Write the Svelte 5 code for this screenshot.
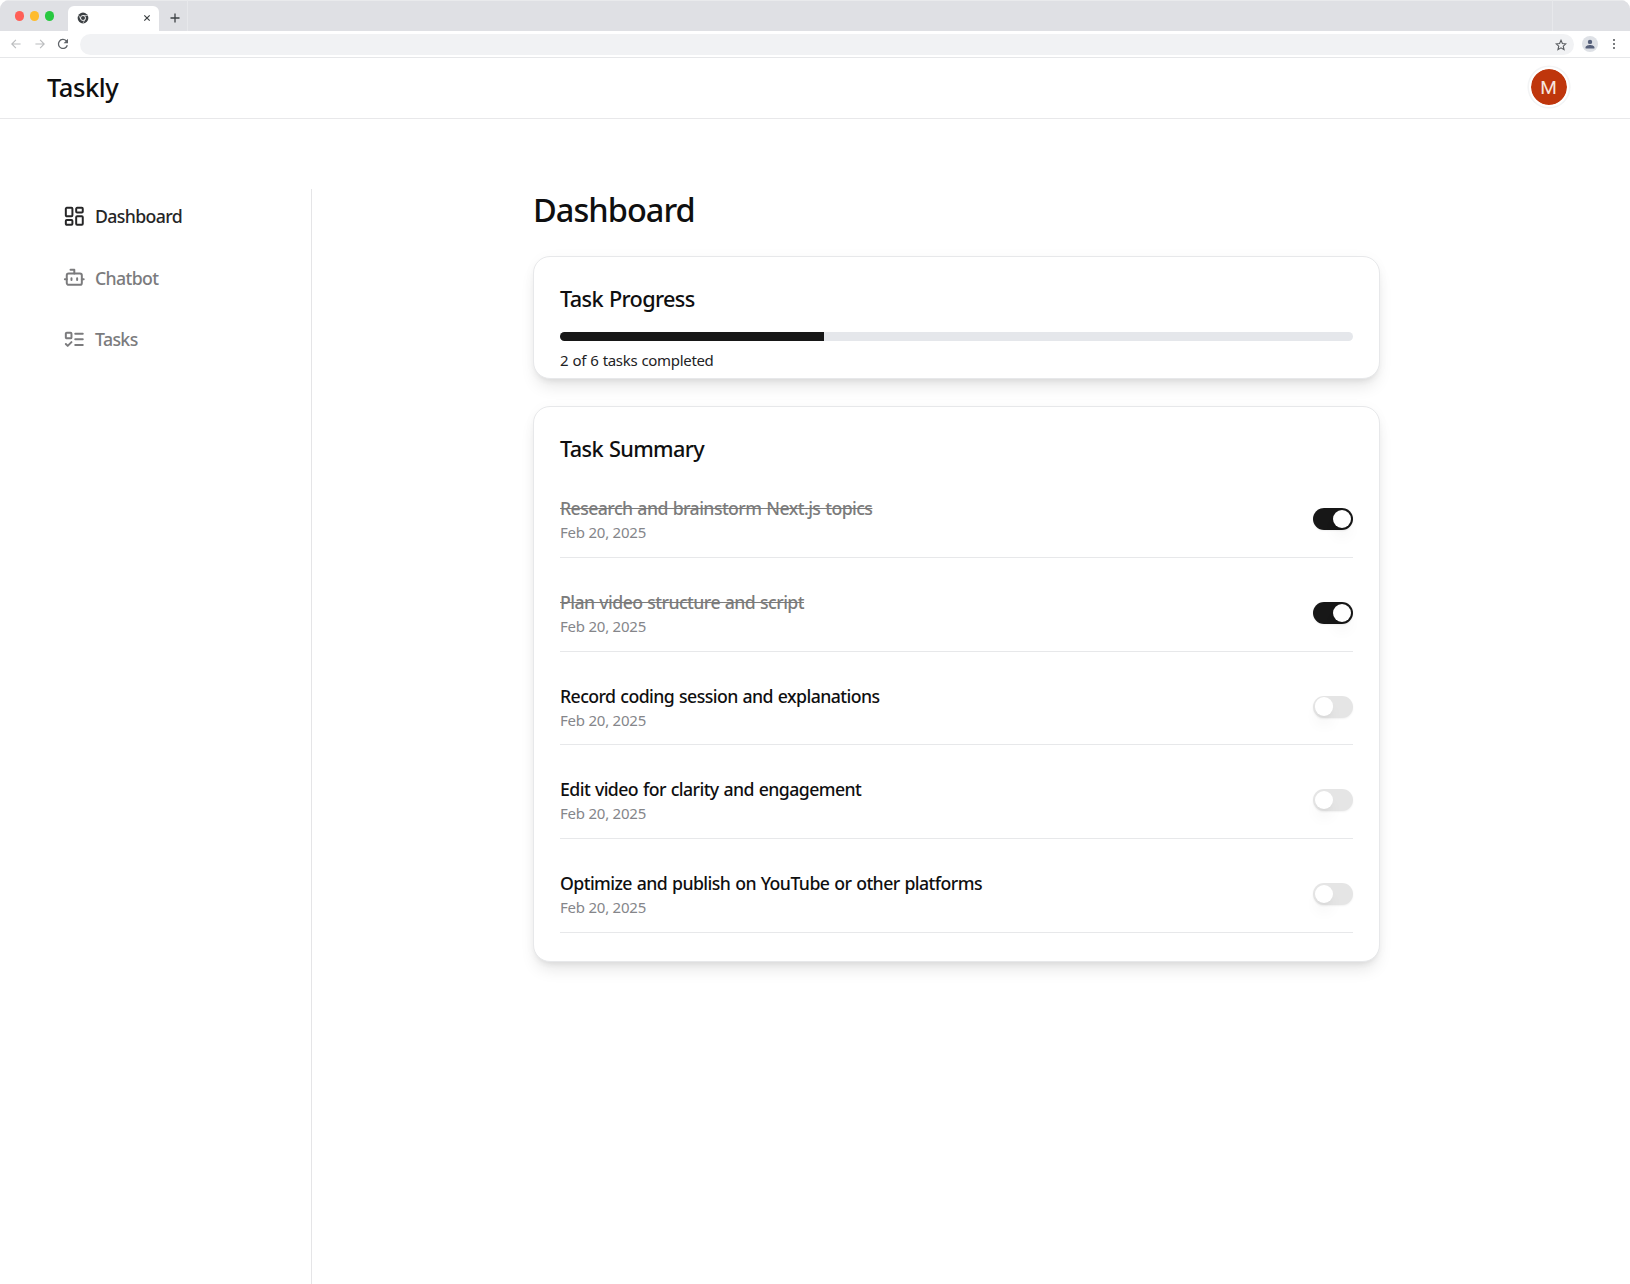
<script>
  const nav = [
    { label: 'Dashboard', icon: 'dashboard', active: true },
    { label: 'Chatbot', icon: 'bot' },
    { label: 'Tasks', icon: 'todo' }
  ];
  let tasks = $state([
    { title: 'Research and brainstorm Next.js topics', date: 'Feb 20, 2025', done: true },
    { title: 'Plan video structure and script', date: 'Feb 20, 2025', done: true },
    { title: 'Record coding session and explanations', date: 'Feb 20, 2025', done: false },
    { title: 'Edit video for clarity and engagement', date: 'Feb 20, 2025', done: false },
    { title: 'Optimize and publish on YouTube or other platforms', date: 'Feb 20, 2025', done: false }
  ]);
  const total = 6;
  let completed = $derived(tasks.filter((t) => t.done).length);
</script>

<div class="window">
  <div class="tabstrip">
    <div class="lights"><i class="red"></i><i class="amber"></i><i class="green"></i></div>
    <div class="tab">
      <svg class="favicon" width="12" height="12" viewBox="0 0 12 12">
        <circle cx="6" cy="6" r="5.4" fill="#3c4043" />
        <circle cx="6" cy="6" r="2.5" fill="none" stroke="#fff" stroke-width=".9" />
        <path d="M6 3.5h4.600M3.8 7.2 1.6 3.2M8.100 7.300 6 11.200" stroke="#fff" stroke-width=".6" />
      </svg>
      <svg class="close" width="8" height="8" viewBox="0 0 8 8" stroke="#3c4043" stroke-width="1.2"><path d="M1.3 1.3l5.4 5.4M6.7 1.3L1.3 6.7" /></svg>
    </div>
    <svg class="plus" width="10" height="10" viewBox="0 0 10 10" stroke="#3c4043" stroke-width="1.3"><path d="M5 .5v9M.5 5h9" /></svg>
  </div>
  <div class="toolbar">
    <svg width="10" height="10" viewBox="0 0 10 10" fill="none" stroke="#babcbe" stroke-width="1.1"><path d="M9.6 5H.8M4.900.8L.8 5l4.1 4.2" /></svg>
    <svg width="10" height="10" viewBox="0 0 10 10" fill="none" stroke="#babcbe" stroke-width="1.1"><path d="M.4 5h8.8M5.1.8L9.2 5 5.1 9.2" /></svg>
    <svg width="12" height="12" viewBox="0 0 12 12"><path d="M10.3 7.2A4.5 4.5 0 1 1 9.2 2.8L10.2 3.8" fill="none" stroke="#5f6368" stroke-width="1.3" /><path d="M11 .8v4.4H6.6z" fill="#5f6368" /></svg>
    <div class="address">
      <svg width="12" height="12" viewBox="0 0 24 24" fill="none" stroke="#5a5d61" stroke-width="2.2"><path d="M12 2.6l2.8 6.5 7 .6-5.3 4.7 1.6 6.9-6.1-3.7-6.1 3.7 1.6-6.9L2.2 9.7l7-.6z" /></svg>
    </div>
    <svg width="16" height="16" viewBox="0 0 16 16"><circle cx="8" cy="8" r="8" fill="#dee1e6" /><circle cx="8" cy="5.900" r="2.200" fill="#56607a" /><path d="M3.600 12.400v-1.200c0-1.500 2.900-2.300 4.400-2.300s4.400.8 4.400 2.300v1.200z" fill="#56607a" /></svg>
    <svg class="more" width="4" height="12" viewBox="0 0 4 12" fill="#5a5d61"><circle cx="2" cy="2" r="1.1" /><circle cx="2" cy="6" r="1.1" /><circle cx="2" cy="10" r="1.1" /></svg>
  </div>

  <header>
    <div class="brand">Taskly</div>
    <div class="avatar"><span>M</span></div>
  </header>

  <div class="body">
    <nav>
      {#each nav as item}
        <div class="link" class:active={item.active}>
          <svg width="22.6" height="22.6" viewBox="0 0 24 24" fill="none" stroke="currentColor" stroke-width="2.1" stroke-linecap="round" stroke-linejoin="round">
            {#if item.icon === 'dashboard'}
              <rect x="3" y="3" width="7" height="9" rx="1" /><rect x="14" y="3" width="7" height="5" rx="1" />
              <rect x="14" y="12" width="7" height="9" rx="1" /><rect x="3" y="16" width="7" height="5" rx="1" />
            {:else if item.icon === 'bot'}
              <path d="M12 8V4H8" /><rect x="4" y="8" width="16" height="12" rx="2" />
              <path d="M2 14h2M20 14h2M15 13v2M9 13v2" />
            {:else}
              <rect x="3" y="5" width="6" height="6" rx="1" /><path d="m3 17 2 2 4-4M13 6h8M13 12h8M13 18h8" />
            {/if}
          </svg>
          <span>{item.label}</span>
        </div>
      {/each}
    </nav>

    <main>
      <h1>Dashboard</h1>
      <section class="card progress-card">
        <h2>Task Progress</h2>
        <div class="track"><div class="fill" style="width: {(completed / total) * 100}%"></div></div>
        <p>{completed} of {total} tasks completed</p>
      </section>
      <section class="card summary-card">
        <h2>Task Summary</h2>
        {#each tasks as task}
          <div class="row">
            <div class="info">
              <div class="title" class:done={task.done}>{task.title}</div>
              <div class="date">{task.date}</div>
            </div>
            <button class="switch" class:on={task.done} role="switch" aria-checked={task.done} aria-label={task.title} onclick={() => (task.done = !task.done)}><span class="thumb"></span></button>
          </div>
        {/each}
      </section>
    </main>
  </div>
</div>

<style>
  :global(body) { margin: 0; background: #fff; }
  .window {
    box-sizing: border-box;
    height: 1284px;
    display: flex;
    flex-direction: column;
    overflow: hidden;
    border-radius: 9px 9px 0 0;
    font-family: "Noto Sans", "Open Sans", sans-serif;
    color: #0f0f10;
  }
  svg { display: block; flex: none; }

  .tabstrip {
    height: 31px;
    flex: none;
    display: flex;
    align-items: flex-end;
    background:
      linear-gradient(#e7e8eb, #e7e8eb) 187px 0 / 1px 100% no-repeat,
      linear-gradient(#e7e8eb, #e7e8eb) 1552px 0 / 1px 100% no-repeat,
      linear-gradient(#e9eaec, #e9eaec) 0 0 / 100% 1px no-repeat,
      #dfe0e4;
  }
  .lights { display: flex; gap: 5.4px; padding: 0 14px 10.5px 15px; }
  .lights i { width: 9.4px; height: 9.4px; border-radius: 50%; }
  .red { background: #ff5f57; }
  .amber { background: #febc2e; }
  .green { background: #28c840; }
  .tab {
    box-sizing: border-box;
    width: 91px;
    height: 25px;
    padding: 0 8px 1px 9.5px;
    display: flex;
    align-items: center;
    justify-content: space-between;
    background: #fff;
    border-radius: 6px 6px 0 0;
  }
  .plus { margin: 0 0 8px 11.5px; }

  .toolbar { box-sizing: border-box; height: 27px; flex: none; display: flex; align-items: center; padding: 0 14px 0 11px; border-bottom: 1px solid #e6e7e9; background: #fff; }
  .toolbar > svg:nth-child(2) { margin-left: 13.5px; }
  .toolbar > svg:nth-child(3) { margin-left: 12.5px; }
  .address { flex: 1; height: 20.5px; margin: 1px 8px 0 10.5px; padding-right: 7px; display: flex; align-items: center; justify-content: flex-end; border-radius: 11px; background: #f1f2f4; }
  .more { margin-left: 14px; }

  header { box-sizing: border-box; height: 61px; flex: none; display: flex; align-items: center; justify-content: space-between; padding: 0 59.5px 2px 47px; border-bottom: 1px solid #e8e8ea; }
  .brand { font-size: 25.5px; font-weight: 500; letter-spacing: -0.45px; line-height: 34px; }
  .avatar { width: 36px; height: 36px; margin: 2px; border: 2px solid #fff; border-radius: 50%; background: #bf360c; background-clip: padding-box; box-shadow: 0 0 0 1.6px #f3f4f5; display: flex; align-items: center; justify-content: center; color: #f6e4de; font: 400 19px/38px Roboto, sans-serif; }
  .avatar span { padding-top: 1px; }

  .body { flex: 1; min-height: 0; display: flex; padding-top: 70px; }
  nav { box-sizing: border-box; width: 312px; flex: none; padding: 11.5px 0 0 63px; border-right: 1px solid #e5e5e7; }
  .link { height: 31.5px; margin-bottom: 30px; display: flex; align-items: center; gap: 9.4px; color: #7b7b7d; font-size: 17.7px; font-weight: 500; letter-spacing: -0.62px; }
  .link.active { color: #262627; }

  main { width: 847px; margin-left: 221px; }
  h1, h2, p { margin: 0; }
  h1 { height: 67px; font-size: 32.5px; line-height: 42px; font-weight: 500; letter-spacing: -0.95px; }
  .card { box-sizing: border-box; padding: 27px 26px 0; border: 1px solid #e7e8ea; border-radius: 17px; background: #fff; box-shadow: 0 10px 16px -3px rgba(0, 0, 0, .1), 0 4px 7px -4px rgba(0, 0, 0, .1), 0 0 14px rgba(0, 0, 0, .025); }
  h2 { height: 30px; font-size: 21.7px; line-height: 30px; font-weight: 500; letter-spacing: -0.65px; word-spacing: 1px; }
  .progress-card { height: 122.5px; margin-bottom: 27.5px; }
  .track { height: 9px; margin-top: 18px; border-radius: 5px; background: #e5e7eb; overflow: hidden; }
  .fill { height: 100%; background: #171717; }
  p { margin-top: 7px; font-size: 15px; line-height: 24px; letter-spacing: -0.32px; word-spacing: .6px; color: #222224; }

  .summary-card { height: 556px; }
  .row { box-sizing: border-box; height: 93.75px; display: flex; align-items: flex-start; justify-content: space-between; padding-top: 31px; border-bottom: 1px solid #e7e8ea; }
  .title { height: 25px; font-size: 17.7px; line-height: 27px; font-weight: 500; letter-spacing: -0.57px; word-spacing: .8px; }
  .title.done { color: #7b7b7b; text-decoration: line-through; text-decoration-thickness: 1px; }
  .date { font-size: 15px; line-height: 24px; letter-spacing: -0.23px; color: #85868a; }
  .switch { box-sizing: border-box; width: 40px; height: 22px; margin-top: 13px; padding: 1.8px 2px; border: 0; border-radius: 11px; display: flex; background: #e5e5e5; box-shadow: 0 1px 2px rgba(0, 0, 0, .06); }
  .switch.on { justify-content: flex-end; background: #171717; }
  .thumb { width: 18.4px; height: 18.4px; border-radius: 50%; background: #fff; box-shadow: 0 10px 15px -3px rgba(0, 0, 0, .08), 0 4px 6px -4px rgba(0, 0, 0, .08); }
</style>
